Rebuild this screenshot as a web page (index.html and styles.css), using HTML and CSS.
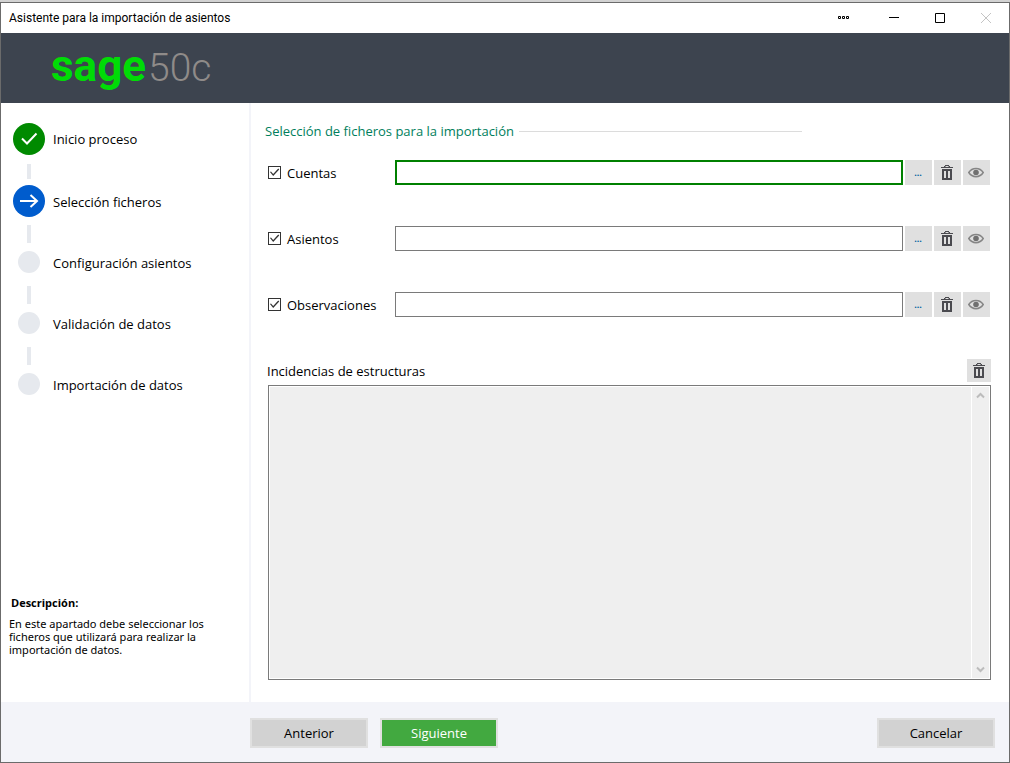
FILE: index.html
```html
<!DOCTYPE html>
<html lang="es">
<head>
    <meta charset="UTF-8">
    <meta name="viewport" content="width=device-width, initial-scale=1.0">
    <title>Asistente para la importación de asientos</title>
    <link rel="stylesheet" href="styles.css">
</head>
<body>

    <svg class="symbols" aria-hidden="true">
        <symbol id="trash" viewBox="0 0 12 16">
            <path d="M4 0.5h4M3 1.5h1.5M7.5 1.5h1.5M0 2.5h12" stroke="#4a4a4f" fill="none"/>
            <path d="M1 4h10v11H1zM3 6v7h2V6zM7 6v7h2V6z" fill="#4a4a4f" fill-rule="evenodd"/>
        </symbol>
        <symbol id="eye" viewBox="0 0 16 12">
            <path d="M0.8 5.500C4.200 0 11.800 0 15.200 5.500C11.800 11 4.200 11 0.800 5.500z" stroke="#858585" stroke-width="1.5" fill="none"/>
            <circle cx="8" cy="5.500" r="2.800" fill="#707070"/>
        </symbol>
    </svg>

    <div class="window">
        <header class="titleBar">
            <h1>Asistente para la importación de asientos</h1>
            <div class="windowButtons">
                <button type="button" aria-label="Opciones">
                    <svg width="11" height="11" viewBox="0 0 11 11"><path d="M0.5 3.5h2v2h-2zM4.5 3.5h2v2h-2zM8.5 3.5h2v2h-2z" fill="none" stroke="#000"/></svg>
                </button>
                <button type="button" aria-label="Minimizar">
                    <svg width="10" height="10" viewBox="0 0 10 10"><path d="M0 4.5h10" stroke="#000"/></svg>
                </button>
                <button type="button" aria-label="Maximizar">
                    <svg width="10" height="10" viewBox="0 0 10 10"><path d="M0.5 0.5h9v9h-9z" fill="none" stroke="#000"/></svg>
                </button>
                <button type="button" aria-label="Cerrar" disabled>
                    <svg width="10" height="10" viewBox="0 0 10 10"><path d="M0 0l10 10M10 0l-10 10" stroke="#c4c4c4"/></svg>
                </button>
            </div>
        </header>

        <div class="brandBar">
            <span class="brandName">sage</span>
            <span class="brandProduct">50c</span>
        </div>

        <div class="content">
            <aside class="sidebar">
                <ol class="steps">
                    <li class="step done">
                        <span class="stepIcon">
                            <svg width="32" height="32" viewBox="0 0 32 32"><path d="M9 15.500l5 5L23.500 10.500" fill="none" stroke="#fff" stroke-width="2"/></svg>
                        </span>
                        <span class="stepName">Inicio proceso</span>
                    </li>
                    <li class="step current">
                        <span class="stepIcon">
                            <svg width="32" height="32" viewBox="0 0 32 32"><path d="M7 16h17M17.500 10l6.500 6l-6.500 6" fill="none" stroke="#fff" stroke-width="2"/></svg>
                        </span>
                        <span class="stepName">Selección ficheros</span>
                    </li>
                    <li class="step">
                        <span class="stepIcon"></span>
                        <span class="stepName">Configuración asientos</span>
                    </li>
                    <li class="step">
                        <span class="stepIcon"></span>
                        <span class="stepName">Validación de datos</span>
                    </li>
                    <li class="step">
                        <span class="stepIcon"></span>
                        <span class="stepName">Importación de datos</span>
                    </li>
                </ol>

                <div class="description">
                    <h2>Descripción:</h2>
                    <p>En este apartado debe seleccionar los ficheros que utilizará para realizar la importación de datos.</p>
                </div>
            </aside>

            <main class="mainPanel">
                <h2 class="sectionTitle">Selección de ficheros para la importación</h2>

                <div class="fileRow">
                    <label class="fileLabel"><input type="checkbox" checked> Cuentas</label>
                    <input class="filePath selected" type="text" aria-label="Fichero de cuentas">
                    <button class="toolButton browse" type="button" aria-label="Examinar">...</button>
                    <button class="toolButton" type="button" aria-label="Borrar"><svg width="12" height="16"><use href="#trash"/></svg></button>
                    <button class="toolButton" type="button" aria-label="Ver"><svg width="16" height="12"><use href="#eye"/></svg></button>
                </div>

                <div class="fileRow">
                    <label class="fileLabel"><input type="checkbox" checked> Asientos</label>
                    <input class="filePath" type="text" aria-label="Fichero de asientos">
                    <button class="toolButton browse" type="button" aria-label="Examinar">...</button>
                    <button class="toolButton" type="button" aria-label="Borrar"><svg width="12" height="16"><use href="#trash"/></svg></button>
                    <button class="toolButton" type="button" aria-label="Ver"><svg width="16" height="12"><use href="#eye"/></svg></button>
                </div>

                <div class="fileRow">
                    <label class="fileLabel"><input type="checkbox" checked> Observaciones</label>
                    <input class="filePath" type="text" aria-label="Fichero de observaciones">
                    <button class="toolButton browse" type="button" aria-label="Examinar">...</button>
                    <button class="toolButton" type="button" aria-label="Borrar"><svg width="12" height="16"><use href="#trash"/></svg></button>
                    <button class="toolButton" type="button" aria-label="Ver"><svg width="16" height="12"><use href="#eye"/></svg></button>
                </div>

                <div class="logHeader">
                    <label for="log">Incidencias de estructuras</label>
                    <button class="toolButton small" type="button" aria-label="Borrar incidencias"><svg width="12" height="16"><use href="#trash"/></svg></button>
                </div>
                <div class="logBox">
                    <textarea id="log" readonly></textarea>
                    <div class="scrollBar">
                        <svg width="9" height="7" viewBox="0 0 9 7"><path d="M1 5.500L4.500 2L8 5.500" fill="none" stroke="#bcbcbc" stroke-width="2"/></svg>
                        <svg width="9" height="7" viewBox="0 0 9 7"><path d="M1 1.500L4.500 5L8 1.500" fill="none" stroke="#bcbcbc" stroke-width="2"/></svg>
                    </div>
                </div>
            </main>
        </div>

        <footer class="footer">
            <button class="footerButton" type="button">Anterior</button>
            <button class="footerButton next" type="button">Siguiente</button>
            <button class="footerButton cancel" type="button">Cancelar</button>
        </footer>
    </div>

</body>
</html>
```

FILE: styles.css
```css
* {
    margin: 0;
    padding: 0;
    box-sizing: border-box;
}

body {
    background-color: #d2d2d2;
    padding-top: 2px;
    min-height: 100vh;
    display: flex;
    font-family: "Open Sans", "Noto Sans", sans-serif;
    font-size: 13px;
    line-height: 18px;
    color: #000;
}

button, input, textarea {
    font: inherit;
    color: inherit;
}

button {
    border: none;
    background: none;
}

svg {
    display: block;
}

.symbols {
    position: absolute;
    width: 0;
    height: 0;
}

.window {
    flex: 1;
    display: flex;
    flex-direction: column;
    background-color: white;
    border: 1px solid #6b6b6b;
}

/* title bar */

.titleBar {
    height: 30px;
    display: flex;
    align-items: center;
    justify-content: space-between;
    padding-left: 8px;
}

.titleBar h1 {
    font-family: Roboto, sans-serif;
    font-size: 12px;
    font-weight: normal;
}

.windowButtons {
    display: flex;
}

.windowButtons button {
    width: 46px;
    height: 28px;
    display: flex;
    align-items: center;
    justify-content: center;
}

.windowButtons button:first-child {
    margin-right: 5px;
}

.brandBar {
    height: 70px;
    background-color: #3d444f;
    display: flex;
    align-items: baseline;
    gap: 2px;
    padding-left: 50px;
    line-height: 66px;
    font-family: Roboto, sans-serif;
}

.brandName {
    font-size: 44px;
    font-weight: 700;
    color: #00dc06;
}

.brandProduct {
    font-size: 39px;
    font-weight: 300;
    color: #8f8b89;
}

/* steps */

.content {
    flex: 1;
    display: flex;
}

.sidebar {
    width: 250px;
    border-right: 2px solid #f3f4f9;
    display: flex;
    flex-direction: column;
    justify-content: space-between;
    padding: 20px 8px 46px;
}

.steps {
    list-style: none;
    padding-left: 4px;
}

.step {
    display: grid;
    grid-template-columns: 32px 1fr;
    column-gap: 8px;
    align-items: center;
    justify-items: center;
}

.step:not(:last-child)::after {
    content: "";
    width: 4px;
    height: 18px;
    margin: 8px 0 3px;
    background-color: #e6e9ee;
}

.step.done::after {
    height: 15px;
    margin: 9px 0 6px;
}

.stepIcon {
    width: 22px;
    height: 22px;
    margin: 5px;
    border-radius: 50%;
    background-color: #e6e9ee;
}

.done .stepIcon, .current .stepIcon {
    width: 32px;
    height: 32px;
    margin: 0;
}

.done .stepIcon {
    background-color: #008a00;
}

.current .stepIcon {
    background-color: #005ccd;
}

.stepName {
    justify-self: start;
    padding-top: 2px;
}

.done .stepName {
    padding-top: 0;
}

.description {
    font-family: "Noto Sans", "Open Sans", sans-serif;
    font-size: 11px;
    line-height: 13px;
}

.description h2 {
    font-family: "Open Sans", "Noto Sans", sans-serif;
    font-size: 11px;
    padding-left: 2px;
    margin-bottom: 8px;
}

.description p {
    max-width: 210px;
}

/* files */

.mainPanel {
    flex: 1;
    display: flex;
    flex-direction: column;
    padding: 19px 18px 22px 14px;
}

.sectionTitle {
    display: flex;
    align-items: center;
    gap: 5px;
    width: 537px;
    margin-bottom: 20px;
    font-size: 13px;
    font-weight: normal;
    color: #007e5c;
}

.sectionTitle::after {
    content: "";
    flex: 1;
    height: 1px;
    background-color: #dcdcdc;
}

.fileRow {
    display: flex;
    gap: 2px;
    margin-bottom: 41px;
    padding-right: 1px;
}

.fileLabel {
    width: 128px;
    display: flex;
    align-items: center;
    gap: 6px;
    padding-left: 3px;
}

.fileLabel input {
    appearance: none;
    width: 13px;
    height: 13px;
    border: 1px solid #333;
    background-color: white;
}

.fileLabel input:checked::before {
    content: "";
    display: block;
    width: 11px;
    height: 11px;
    background-color: #333;
    clip-path: polygon(9% 45%, 18% 40%, 38% 63%, 84% 14%, 93% 22%, 38% 82%);
}

.filePath {
    flex: 1;
    min-width: 0;
    height: 25px;
    border: 1px solid #7a7a7a;
    padding: 0 4px;
    outline: none;
}

.filePath.selected, .filePath:focus {
    border: 2px solid #008000;
}

.toolButton {
    width: 27px;
    height: 25px;
    display: flex;
    align-items: center;
    justify-content: center;
    padding-right: 1px;
    background-color: #e0e0e0;
}

.toolButton.browse {
    font-size: 9px;
    font-weight: bold;
    color: #00609f;
}

.toolButton.small {
    width: 24px;
    height: 23px;
    padding: 0;
}

.logHeader {
    display: flex;
    align-items: center;
    justify-content: space-between;
    padding-left: 2px;
    margin: 1px 0 3px;
}

.logBox {
    flex: 1;
    display: flex;
    margin-left: 3px;
    border: 1px solid #7a7a7a;
    padding: 1px;
    background-color: white;
}

.logBox textarea {
    flex: 1;
    border: none;
    outline: none;
    resize: none;
    background-color: #efefef;
}

.scrollBar {
    width: 17px;
    margin-left: 1px;
    padding: 5px 0;
    display: flex;
    flex-direction: column;
    align-items: center;
    justify-content: space-between;
    background-color: #efefef;
}

/* footer */

.footer {
    height: 60px;
    display: flex;
    align-items: center;
    gap: 12px;
    padding: 2px 14px 0 249px;
    background-color: #f3f4f9;
}

.footerButton {
    width: 118px;
    height: 30px;
    border: 2px solid #e0e0e0;
    background-color: #d2d2d2;
}

.footerButton.next {
    background-color: #42a940;
    color: white;
}

.footerButton.cancel {
    margin-left: auto;
}
```
